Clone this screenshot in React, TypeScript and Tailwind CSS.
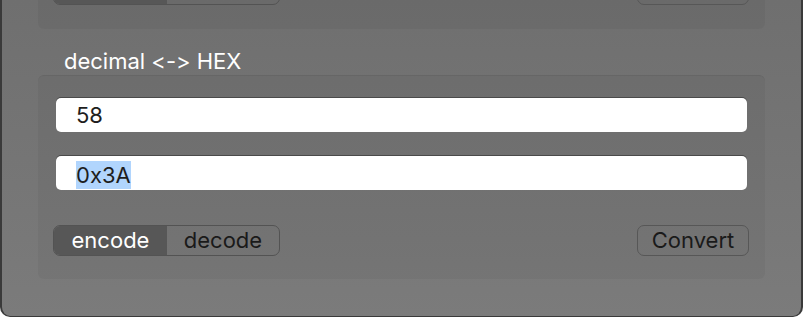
import React from "react";

const ff = "font-['Inter','Liberation_Sans',sans-serif] [font-feature-settings:'calt'_0,'liga'_0]";

function Controls({ labels }: { labels: boolean }) {
  return (
    <div className="flex h-[31px] items-center justify-between pl-[15px] pr-[16px]">
      <div className="flex h-[31px] w-[227px] overflow-hidden rounded-[7px] border border-[#535353] text-[22px]">
        <div className="flex w-[113px] items-center justify-center bg-[#575757] text-white">{labels ? "encode" : ""}</div>
        <div className="flex flex-1 items-center justify-center text-[#1a1a1a]">{labels ? "decode" : ""}</div>
      </div>
      <div className="flex h-[31px] w-[112px] items-center justify-center rounded-[7px] border border-[#575757] text-[22px] text-[#1a1a1a]">
        {labels ? "Convert" : ""}
      </div>
    </div>
  );
}

export default function App() {
  return (
    <div className="h-[318px] w-[804px] overflow-hidden bg-white">
      <div className={`h-[317px] w-[803px] overflow-hidden rounded-b-[10px] border-l-2 border-r-2 border-b border-[#3a3a3a] bg-gradient-to-b from-[#6f6f6f] to-[#7b7b7b] ${ff}`}>
        <div className="mx-[36px] h-[29px] overflow-hidden rounded-b-[6px] bg-[rgba(0,0,0,0.04)]">
          <div className="-mt-[26px]">
            <Controls labels={false} />
          </div>
        </div>
        <div className="mt-[19px] h-[26px] pl-[62px] text-[22px] leading-[26px] text-white">
          decimal &lt;-&gt; HEX
        </div>
        <div className="mx-[36px] mt-[1px] flex flex-col rounded-[6px] border-t border-[#666666] bg-[rgba(0,0,0,0.04)] pt-[22px] pb-[23px]">
          <div className="mx-[18px] flex h-[34px] items-center rounded-[5px] bg-white pl-[20px] text-[22px] text-[#1e1e1e] shadow-[0_-1px_0_#4a4a4a]">
            58
          </div>
          <div className="mx-[18px] mt-[24px] flex h-[34px] items-end rounded-[5px] bg-white pb-[1px] pl-[20px] text-[22px] text-[#1e1e1e] shadow-[0_-1px_0_#4a4a4a]">
            <span className="bg-[#b1d5fd] leading-[28px]">0x3A</span>
          </div>
          <div className="mt-[35px]">
            <Controls labels={true} />
          </div>
        </div>
      </div>
    </div>
  );
}
